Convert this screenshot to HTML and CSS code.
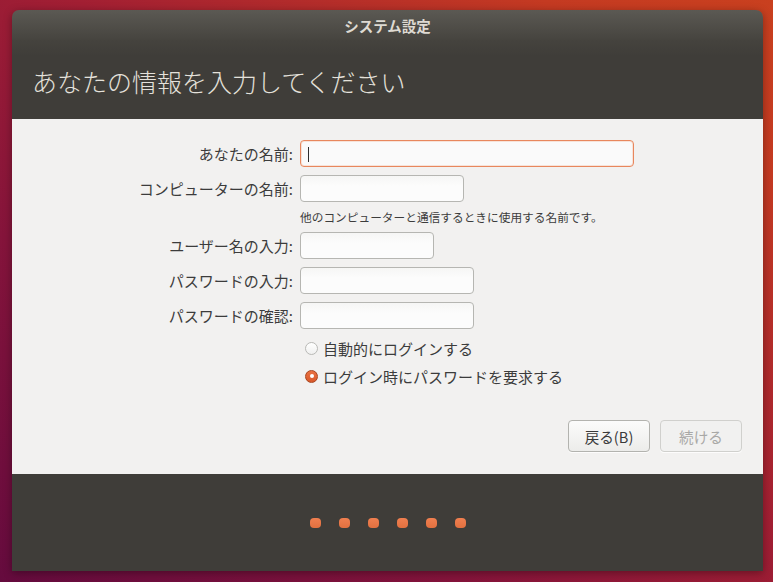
FILE: index.html
```html
<!DOCTYPE html>
<html lang="ja">
<head>
<meta charset="utf-8">
<title>システム設定</title>
<link rel="stylesheet" href="styles.css">
</head>
<body>
<div class="window">
  <div class="titlebar">システム設定</div>
  <div class="header"><h1 class="header-title">あなたの情報を入力してください</h1></div>
  <div class="content">
    <div class="form">
      <label class="label">あなたの名前:</label>
      <div class="field"><div class="input input-focus input-w1"><span class="caret"></span></div></div>
      <label class="label">コンピューターの名前:</label>
      <div class="field"><div class="input input-w2"></div></div>
      <div class="spacer"></div>
      <div class="hint">他のコンピューターと通信するときに使用する名前です。</div>
      <label class="label">ユーザー名の入力:</label>
      <div class="field"><div class="input input-w3"></div></div>
      <label class="label">パスワードの入力:</label>
      <div class="field"><div class="input input-w4"></div></div>
      <label class="label">パスワードの確認:</label>
      <div class="field"><div class="input input-w4"></div></div>
    </div>
    <div class="radios">
      <div class="radio-row"><span class="radio"></span><span class="radio-text">自動的にログインする</span></div>
      <div class="radio-row"><span class="radio radio-checked"></span><span class="radio-text">ログイン時にパスワードを要求する</span></div>
    </div>
    <div class="buttons">
      <div class="button">戻る(B)</div>
      <div class="button button-disabled">続ける</div>
    </div>
  </div>
  <div class="footer">
    <div class="dots">
      <span class="dot"></span><span class="dot"></span><span class="dot"></span><span class="dot"></span><span class="dot"></span><span class="dot"></span>
    </div>
  </div>
</div>
</body>
</html>
```
FILE: styles.css
```css
html, body {
  margin: 0;
  padding: 0;
}
body {
  width: 773px;
  height: 582px;
  overflow: hidden;
  background: linear-gradient(to top right, #650b3e 0%, #85143b 30%, #a21f33 55%, #c43a22 85%, #c9401f 100%);
  font-family: "Noto Sans CJK JP", "Noto Sans", sans-serif;
}
.window {
  margin: 10px 0 0 12px;
  width: 751px;
  height: 561px;
  display: flex;
  flex-direction: column;
  border-radius: 7px 7px 0 0;
  overflow: hidden;
  box-shadow: 0 2px 8px rgba(0,0,0,0.35);
}
.titlebar {
  height: 30px;
  flex: none;
  display: flex;
  align-items: center;
  justify-content: center;
  background: linear-gradient(#5b5953, #46443f);
  color: #dedad2;
  font-size: 14.5px;
  font-weight: bold;
}
.header {
  height: 79px;
  flex: none;
  background: linear-gradient(#45433e, #3f3d39 20%);
  display: flex;
  align-items: center;
  padding-left: 20px;
}
.header-title {
  margin: 0;
  margin-top: 3px;
  font-size: 25px;
  font-weight: 300;
  color: #e4e1db;
  letter-spacing: 0;
}
.content {
  flex: none;
  height: 355px;
  background: #f2f1f0;
  display: flex;
  flex-direction: column;
  box-sizing: border-box;
  padding: 21px 21px 22px 0;
}
.form {
  display: grid;
  grid-template-columns: 281px 1fr;
  column-gap: 7px;
  row-gap: 8px;
  align-items: center;
}
.label {
  text-align: right;
  font-size: 15px;
  color: #3c3c3c;
  line-height: 27px;
}
.field {
  display: flex;
}
.input {
  height: 27px;
  box-sizing: border-box;
  border: 1px solid #b6b6b2;
  border-radius: 4px;
  background: linear-gradient(#f6f6f5, #fcfcfc 40%);
  position: relative;
}
.input-focus {
  border-color: #e8875d;
  box-shadow: inset 0 0 0 1px rgba(240, 160, 120, 0.25);
  background: #fafafa;
}
.caret {
  position: absolute;
  left: 7px;
  top: 6px;
  width: 1px;
  height: 15px;
  background: #2e2e2e;
}
.input-w1 { width: 334px; }
.input-w2 { width: 164px; }
.input-w3 { width: 134px; }
.input-w4 { width: 174px; }
.spacer { height: 14px; }
.hint {
  font-size: 11.7px;
  color: #3c3c3c;
  line-height: 14px;
  white-space: nowrap;
}
.radios {
  margin-top: 10px;
  padding-left: 293px;
  display: flex;
  flex-direction: column;
  gap: 10px;
}
.radio-row {
  display: flex;
  align-items: center;
  height: 18px;
}
.radio {
  width: 13px;
  height: 13px;
  box-sizing: border-box;
  border-radius: 50%;
  border: 1px solid #b9b9b6;
  background: linear-gradient(#ffffff, #f0f0ef);
  margin-right: 5px;
  flex: none;
  position: relative;
}
.radio-checked {
  border-color: #a8451f;
  background: linear-gradient(#ea7243, #d9592a);
}
.radio-checked::after {
  content: "";
  position: absolute;
  left: 3.5px;
  top: 3.5px;
  width: 4px;
  height: 4px;
  border-radius: 50%;
  background: #ffffff;
}
.radio-text {
  font-size: 15px;
  color: #3c3c3c;
}
.buttons {
  margin-top: auto;
  display: flex;
  justify-content: flex-end;
  gap: 10px;
}
.button {
  width: 82px;
  height: 32px;
  box-sizing: border-box;
  border: 1px solid #b3b3af;
  border-radius: 4px;
  background: linear-gradient(#fbfbfb, #ececea);
  display: flex;
  align-items: center;
  justify-content: center;
  font-size: 14.6px;
  color: #3a3a3a;
  box-shadow: 0 1px 0 rgba(255,255,255,0.8);
}
.button-disabled {
  border-color: #d0d0cd;
  background: #f1f1f0;
  color: #a8a8a6;
}
.footer {
  flex: 1;
  background: #3f3d39;
  display: flex;
  align-items: center;
  justify-content: center;
}
.dots {
  display: flex;
  gap: 18px;
}
.dot {
  width: 11px;
  height: 10px;
  border-radius: 4px;
  background: linear-gradient(#f07f50, #e2703f);
}
```
